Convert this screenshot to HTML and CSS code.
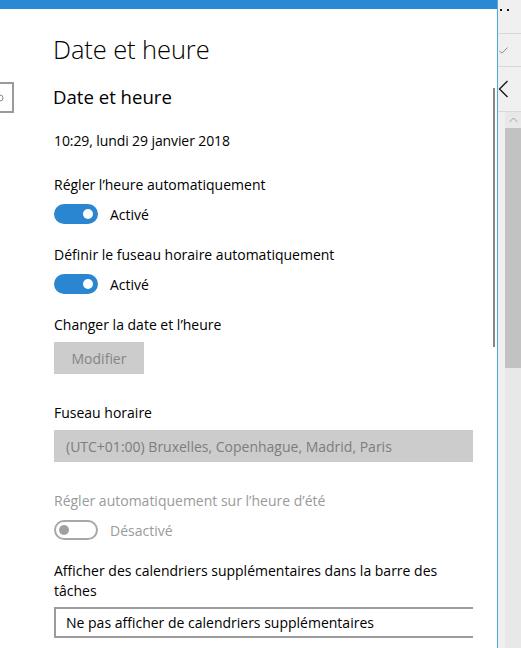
FILE: index.html
```html
<!DOCTYPE html>
<html lang="fr">
<head>
<meta charset="utf-8">
<title>Date et heure</title>
<link rel="stylesheet" href="styles.css">
</head>
<body>
<div class="window">
  <div class="panel">
    <div class="topbar"></div>
    <div class="panel-body">
      <div class="side">
        <div class="search-stub">
          <svg width="6" height="10" viewBox="0 0 6 10"><circle cx="0" cy="5" r="3" fill="none" stroke="#8a8a8a" stroke-width="1"/></svg>
        </div>
      </div>
      <div class="content">
        <h1 class="title">Date et heure</h1>
        <h2 class="subtitle">Date et heure</h2>
        <p class="text now">10:29, lundi 29 janvier 2018</p>

        <p class="text label-a">Régler l’heure automatiquement</p>
        <div class="toggle-row row-a">
          <span class="toggle on"><span class="knob"></span></span>
          <span class="toggle-label">Activé</span>
        </div>

        <p class="text label-b">Définir le fuseau horaire automatiquement</p>
        <div class="toggle-row row-b">
          <span class="toggle on"><span class="knob"></span></span>
          <span class="toggle-label">Activé</span>
        </div>

        <p class="text label-c">Changer la date et l’heure</p>
        <div class="button disabled">Modifier</div>

        <p class="text label-d">Fuseau horaire</p>
        <div class="select disabled">(UTC+01:00) Bruxelles, Copenhague, Madrid, Paris</div>

        <p class="text label-e muted">Régler automatiquement sur l’heure d’été</p>
        <div class="toggle-row row-c">
          <span class="toggle off"><span class="knob"></span></span>
          <span class="toggle-label muted">Désactivé</span>
        </div>

        <p class="text label-f">Afficher des calendriers supplémentaires dans la barre des tâches</p>
        <div class="select outlined">Ne pas afficher de calendriers supplémentaires</div>
      </div>
      <div class="inner-scroll"><div class="inner-thumb"></div></div>
    </div>
  </div>
  <div class="edge"></div>
  <div class="strip">
    <div class="strip-cell dots"><span class="dot"></span><span class="dot"></span></div>
    <div class="strip-cell check">
      <svg width="9" height="8" viewBox="0 0 9 8"><path d="M0.5 5 L3 7.2 L8.5 1.5" fill="none" stroke="#8c8c8c" stroke-width="1"/></svg>
    </div>
    <div class="strip-cell back">
      <svg width="11" height="18" viewBox="0 0 11 18"><path d="M9.5 1 L1.5 9 L9.5 17" fill="none" stroke="#111" stroke-width="1.3"/></svg>
    </div>
    <div class="strip-scroll">
      <div class="sb">
        <div class="sb-up">
          <svg width="9" height="6" viewBox="0 0 9 6"><path d="M0.5 5 L4.5 1 L8.5 5" fill="none" stroke="#a0a0a0" stroke-width="1"/></svg>
        </div>
        <div class="sb-thumb"></div>
        <div class="sb-track"></div>
      </div>
    </div>
  </div>
</div>
</body>
</html>
```

FILE: styles.css
```css
* { box-sizing: border-box; }
html, body { margin: 0; padding: 0; background: #fff; }
body {
  font-family: "Open Sans", "Noto Sans", sans-serif;
  color: #000;
  overflow: hidden;
}

.window {
  display: flex;
  width: 521px;
  height: 648px;
  overflow: hidden;
}

.panel {
  width: 497px;
  flex: none;
  display: flex;
  flex-direction: column;
  background: #fff;
}

.topbar {
  height: 9px;
  background: #2b88d2;
  flex: none;
}

.panel-body {
  display: flex;
  flex: 1;
  min-height: 0;
}

.side {
  width: 14px;
  flex: none;
}

.search-stub {
  margin-top: 73px;
  width: 14px;
  height: 31px;
  border: 2px solid #9a9a9a;
  border-left: none;
  display: flex;
  align-items: center;
}

.content {
  width: 419px;
  margin-left: 40px;
  flex: none;
  overflow: hidden;
}

.title {
  margin: 22px 0 0 -1px;
  font-weight: 300;
  font-size: 25.5px;
  line-height: 36px;
  letter-spacing: -0.1px;
}

.subtitle {
  margin: 16px 0 0 -1px;
  font-weight: 400;
  font-size: 18.6px;
  line-height: 28px;
}

.text {
  margin: 0;
  font-size: 14px;
  line-height: 20px;
  white-space: nowrap;
}

.now { margin-top: 20px; letter-spacing: -0.1px; }
.label-a { margin-top: 24px; }
.label-b { margin-top: 21px; }
.label-c { margin-top: 21px; }
.label-d { margin-top: 29px; }
.label-e { margin-top: 29px; }
.label-f { margin-top: 21px; white-space: normal; width: 400px; }

.muted { color: #9a9a9a; }

.toggle-row {
  display: flex;
  align-items: center;
  gap: 12px;
  height: 20px;
  font-size: 14px;
}
.row-a { margin-top: 9px; }
.row-b { margin-top: 9px; }
.row-c { margin-top: 9px; }

.toggle {
  width: 44px;
  height: 20px;
  border-radius: 10px;
  display: flex;
  align-items: center;
  padding: 0 5px;
  flex: none;
}
.toggle .knob {
  width: 10px;
  height: 10px;
  border-radius: 50%;
}
.toggle.on {
  background: #2a86d0;
  justify-content: flex-end;
}
.toggle.on .knob { background: #fff; }
.toggle.off {
  border: 2px solid #a8a8a8;
  padding: 0 3px;
  justify-content: flex-start;
}
.toggle.off .knob { background: #a0a0a0; }

.button {
  margin-top: 7px;
  width: 90px;
  height: 32px;
  display: flex;
  align-items: center;
  justify-content: center;
  font-size: 14px;
}
.button.disabled {
  background: #cccccc;
  color: #858585;
}

.select {
  height: 32px;
  display: flex;
  align-items: center;
  font-size: 14px;
  white-space: nowrap;
}
.select.disabled {
  margin-top: 7px;
  width: 419px;
  background: #cccccc;
  color: #7d7d7d;
  padding-left: 12px;
}
.select.outlined {
  margin-top: 6px;
  width: 440px;
  height: 31px;
  border: 2px solid #9c9c9c;
  padding-left: 10px;
  color: #000;
}

.inner-scroll {
  margin-left: 20px;
  width: 2px;
  flex: none;
}
.inner-thumb {
  margin-top: 79px;
  height: 259px;
  background: #878787;
}

.edge {
  width: 1px;
  flex: none;
  background: #4ea9dc;
}

.strip {
  width: 23px;
  flex: none;
  background: #f0f0f0;
  display: flex;
  flex-direction: column;
}

.strip-cell {
  border-bottom: 1px solid #d9d9d9;
  display: flex;
  flex: none;
}
.dots {
  height: 34px;
  padding: 9px 0 0 2px;
  gap: 5px;
  align-items: flex-start;
}
.dot {
  width: 2px;
  height: 2px;
  background: #111;
}
.check {
  height: 33px;
  align-items: center;
  padding-left: 1px;
}
.back {
  height: 45px;
  align-items: center;
  padding-left: 0;
}

.strip-scroll {
  flex: 1;
  display: flex;
  padding-left: 7px;
}
.sb {
  width: 16px;
  display: flex;
  flex-direction: column;
}
.sb-up {
  height: 16px;
  background: #e8e8e8;
  display: flex;
  align-items: center;
  justify-content: center;
}
.sb-thumb {
  height: 240px;
  background: #c2c2c2;
}
.sb-track {
  flex: 1;
  background: #e8e8e8;
}
```
